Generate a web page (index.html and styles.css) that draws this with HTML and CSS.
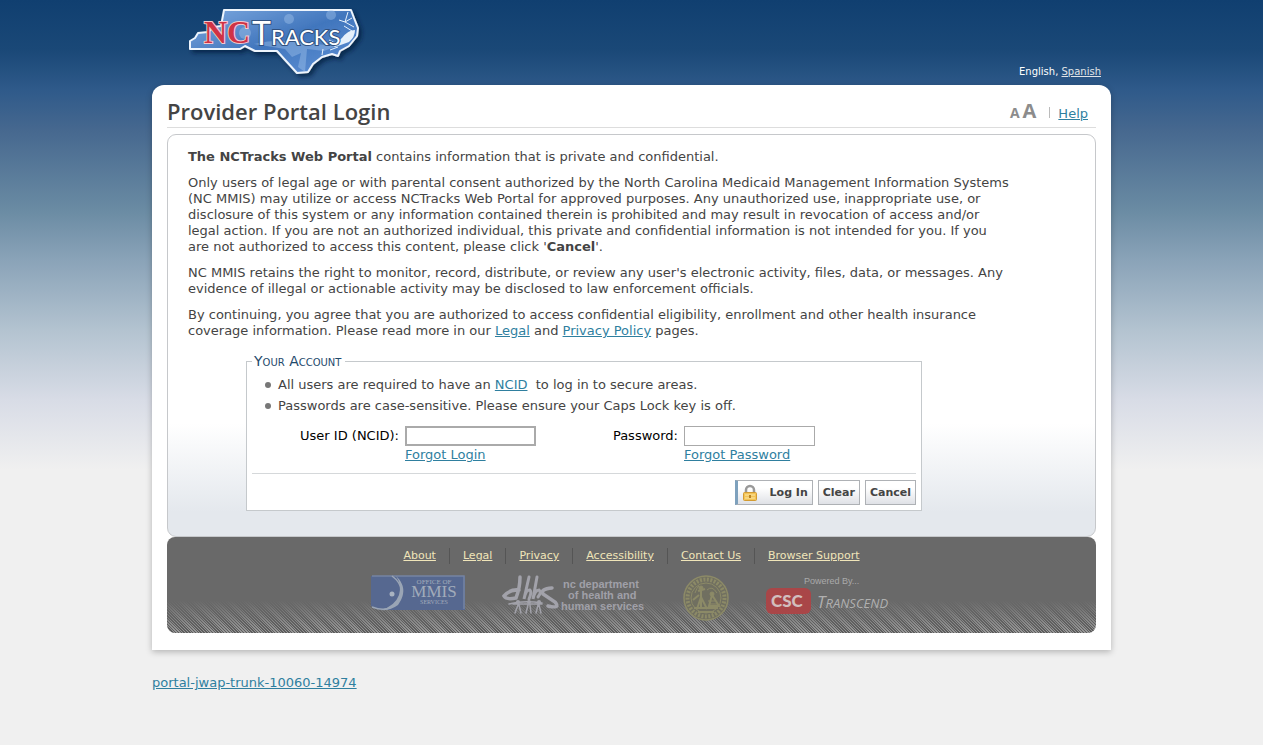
FILE: index.html
```html
<!DOCTYPE html>
<html lang="en">
<head>
<meta charset="utf-8">
<title>Provider Portal Login</title>
<link rel="stylesheet" href="styles.css">
</head>
<body>
<div class="page">
  <header class="masthead">
    <svg class="brand" width="182" height="80" viewBox="0 0 182 80" role="img" aria-label="NCTracks">
      <defs>
        <linearGradient id="state" x1="0" y1="0" x2="1" y2="1">
          <stop offset="0" stop-color="#7faae0"/><stop offset=".5" stop-color="#4176bd"/><stop offset="1" stop-color="#5f91d6"/>
        </linearGradient>
        <filter id="drop" x="-10%" y="-10%" width="125%" height="130%"><feDropShadow dx="3" dy="3" stdDeviation="2" flood-color="#031c3c" flood-opacity=".7"/></filter>
        <clipPath id="inside"><path d="M6 49V41L11 38L14 33L24 32L30 27L37 26L47 10H167L172 20L173 34L165 46L153 54L138 57L124 72L113 73L93 51L71 51L61 46Z"/></clipPath>
      </defs>
      <path filter="url(#drop)" d="M6 49V41L11 38L14 33L24 32L30 27L37 26L40 10H167L170 18L174 28L173 36L165 46L156 51L154 56L148 54L138 57L129 64L124 72L113 73L102 61L93 51L71 51L61 46L56 49Z" fill="url(#state)" stroke="#eef5fd" stroke-width="2" stroke-linejoin="round"/>
      <g clip-path="url(#inside)" fill="#a9c8ee" opacity=".4">
        <circle cx="105" cy="19" r="5"/><circle cx="147" cy="15" r="5"/><circle cx="61" cy="33" r="6"/>
        <path d="M70 44Q95 38 120 43L153 46L140 51L123 49L121 72L114 67L117 53L108 57L101 49Z"/>
      </g>
      <path d="M171 30Q164 30 158 38Q152 43 147 44L151 47L165 42Q171 37 171 30Z" fill="#e5f0fb"/>
      <path d="M164 12L161 22L168 18M161 22L170 27M161 22L155 20M160 26L168 31M138 55l1-6M146 50l8-3M151 43l-6-3" fill="none" stroke="#e5f0fb"/>
      <text x="20" y="43" class="brand-nc">NC</text>
      <text x="68" y="45" class="brand-tracks"><tspan font-size="32">T</tspan><tspan font-size="22">RACKS</tspan></text>
    </svg>
    <p class="languages">English, <a href="#">Spanish</a></p>
  </header>

  <div class="sheet">
    <div class="heading">
      <h1>Provider Portal Login</h1>
      <div class="tools">
        <button type="button" class="size-small" aria-label="Smaller text">A</button>
        <button type="button" class="size-large" aria-label="Larger text">A</button>
        <span class="rule"></span>
        <a href="#">Help</a>
      </div>
    </div>

    <main class="content">
      <div class="copy">
        <p><strong>The NCTracks Web Portal</strong> contains information that is private and confidential.</p>
        <p>Only users of legal age or with parental consent authorized by the North Carolina Medicaid Management Information Systems (NC MMIS) may utilize or access NCTracks Web Portal for approved purposes. Any unauthorized use, inappropriate use, or disclosure of this system or any information contained therein is prohibited and may result in revocation of access and/or legal action. If you are not an authorized individual, this private and confidential information is not intended for you. If you are not authorized to access this content, please click '<strong>Cancel</strong>'.</p>
        <p>NC MMIS retains the right to monitor, record, distribute, or review any user's electronic activity, files, data, or messages. Any evidence of illegal or actionable activity may be disclosed to law enforcement officials.</p>
        <p>By continuing, you agree that you are authorized to access confidential eligibility, enrollment and other health insurance coverage information. Please read more in our <a href="#">Legal</a> and <a href="#">Privacy Policy</a> pages.</p>
      </div>
      <form class="login">
        <fieldset>
          <legend>Your Account</legend>
          <ul class="notes">
            <li>All users are required to have an <a href="#">NCID</a>&nbsp; to log in to secure areas.</li>
            <li>Passwords are case-sensitive. Please ensure your Caps Lock key is off.</li>
          </ul>
          <div class="fields">
            <label for="user">User ID (NCID):</label>
            <div class="field"><input id="user" class="active" type="text"><a href="#">Forgot Login</a></div>
            <label for="pass">Password:</label>
            <div class="field"><input id="pass" type="password"><a href="#">Forgot Password</a></div>
          </div>
          <div class="actions">
            <button type="button" class="log-in">
              <svg width="16" height="18" viewBox="0 0 16 18" aria-hidden="true">
                <path d="M4 9V6a4 4 0 0 1 8 0v3" fill="none" stroke="#999" stroke-width="2.5"/>
                <rect x="1.5" y="8.500" width="13" height="8" rx="1" fill="#f3c457" stroke="#d39b31"/>
                <path d="M3 11h10M3 14h10" stroke="#fbe7a8"/><path d="M7 11h2v3H7z" fill="#b98325"/>
              </svg>
              Log In
            </button>
            <button type="reset">Clear</button>
            <button type="button">Cancel</button>
          </div>
        </fieldset>
      </form>
    </main>

    <footer class="footer">
      <nav class="links">
        <a href="#">About</a><a href="#">Legal</a><a href="#">Privacy</a><a href="#">Accessibility</a><a href="#">Contact Us</a><a href="#">Browser Support</a>
      </nav>
      <div class="partners">
        <svg width="94" height="36" viewBox="0 0 94 36" role="img" aria-label="Office of MMIS Services">
          <path d="M0 1H94V35H14Q4 34 0 31Z" fill="#566890"/>
          <path d="M1 1H93V34" fill="none" stroke="#7584a2" stroke-width="1.500"/>
          <path d="M21 1C32 9 32 19 26 28Q17 38 1 32" fill="none" stroke="#9aa5b5" stroke-width="1.500"/>
          <path d="M25 1C36 11 33 22 27 30Q19 36 10 35Q24 31 28 20Q31 10 25 1Z" fill="#9aa5b5"/>
          <circle cx="21" cy="19" r="2.500" fill="#a9b3c1"/>
          <g font-family="Liberation Serif, serif" fill="#a1abba" text-anchor="middle"><text x="63" y="9" font-size="7">OFFICE OF</text><text x="63" y="22" font-size="17">MMIS</text><text x="63" y="29" font-size="6">SERVICES</text></g>
        </svg>
        <svg width="144" height="42" viewBox="0 0 144 42" role="img" aria-label="NC Department of Health and Human Services">
          <g fill="none" stroke="#a2a2aa" stroke-linecap="round">
            <path d="M18 2Q18 13 14 23Q4 25 2 21Q8 14 17 15" stroke-width="3.500"/>
            <path d="M27 2L22 24Q24 14 28 15Q30 17 27 24M35 2L31 24Q33 15 37 15Q40 17 36 22" stroke-width="3"/>
            <path d="M50 13Q38 14 41 19L53 27Q59 34 46 31" stroke-width="3.500"/>
            <path d="M7 29Q22 25 40 28M11 29h10M22 29h9M32 29h8M16 30L13 38M17 30L19 38M26 30L24 38M28 30L29 38M36 30L34 38M37 30L39 38" stroke-width="1.500"/>
          </g>
          <g fill="#a2a2aa"><circle cx="16" cy="27" r="2"/><circle cx="27" cy="27" r="2"/><circle cx="37" cy="27" r="2"/></g>
          <g class="dhhs-name"><text x="61" y="13">nc department</text><text x="66" y="24">of health and</text><text x="59" y="35">human services</text></g>
        </svg>
        <svg width="46" height="46" viewBox="0 0 46 46" role="img" aria-label="State seal">
          <g fill="none" stroke="#8c8a67">
            <circle cx="23" cy="23" r="22" fill="#706f60" stroke-width="1.500"/>
            <circle cx="23" cy="23" r="18.500" stroke-width="4" stroke-dasharray="2 1.500"/>
            <circle cx="23" cy="23" r="15"/>
            <path d="M18 12v20M15 16l7-2M14 34l4-12 6 12M26 31l3-11 7 11zM11 33h24M10 25l6-5M15 37h16" stroke-width="2"/>
            <circle cx="18" cy="13" r="2" fill="#8c8a67"/><circle cx="29" cy="19" r="2" fill="#8c8a67"/>
            <path d="M24 15q5-5 10 3M12 18q2-6 4-7M25 26h7M27 29h8"/>
          </g>
        </svg>
        <svg width="126" height="42" viewBox="0 0 126 42" role="img" aria-label="Powered by CSC Transcend">
          <text x="38" y="9" class="powered">Powered By...</text>
          <rect x="0" y="13" width="45" height="26" rx="6" fill="#a94648"/>
          <text x="5" y="32" class="csc">CSC</text>
          <text x="51" y="33" class="transcend"><tspan font-size="17">T</tspan><tspan font-size="13">RANSCEND</tspan></text>
        </svg>
      </div>
    </footer>
  </div>
  <p class="build"><a href="#">portal-jwap-trunk-10060-14974</a></p>
</div>
</body>
</html>
```
FILE: styles.css
```css
* { box-sizing: border-box; }
body {
  margin: 0;
  min-height: 100vh;
  background: #f0f0f0 linear-gradient(#103f70, #1a4877 50px, #2f5a8a 90px, #46688f 130px, #6a8ba3 210px, #8aa3b8 260px, #b3c3d0 330px, #d8dce6 400px, #f0f0f0 470px) no-repeat;
  color: #444;
  font: 13px/16px "DejaVu Sans", sans-serif;
}
a { color: #2f7f9f; }
p, h1, ul { margin: 0; }
.page { max-width: 959px; margin: 0 auto; }
.masthead { display: flex; justify-content: space-between; align-items: flex-end; height: 85px; padding: 0 10px 5px 32px; }
.brand { overflow: visible; }
.brand-nc { font: bold 32px "Liberation Serif", serif; fill: #cf3245; stroke: #f3c9cf; stroke-width: 2px; paint-order: stroke; }
.brand-tracks { font-family: Lato, sans-serif; fill: #fff; stroke: #31517f; stroke-width: 2px; paint-order: stroke; }
.languages { font-size: 10px; color: #fff; }
.languages a { color: #e0e4e8; }
.sheet { padding: 12px 15px 17px; background: #fff; border-radius: 12px 12px 0 0; box-shadow: 0 2px 6px rgba(0, 0, 0, .25); }
.heading { display: flex; justify-content: space-between; align-items: center; height: 31px; border-bottom: 1px solid #ddd; }
h1 { font: 600 22px/28px "Open Sans", sans-serif; padding-bottom: 2px; }
.tools { display: flex; align-items: baseline; padding: 0 8px 4px 0; }
.tools button { padding: 0; border: 0; background: none; color: #8c8c8c; font: bold 14px "Open Sans", sans-serif; }
.tools .size-large { margin-left: 3px; font-size: 20px; }
.rule { width: 1px; height: 11px; margin: 0 8px 0 13px; background: #bbb; }
.content { margin-top: 6px; padding: 14px 20px 25px; border: 1px solid #c6c8cb; border-radius: 9px; background: linear-gradient(#fff 72%, #e4e8ed 94%); }
.copy { max-width: 822px; }
.copy p { margin-bottom: 10px; }
.login { max-width: 676px; margin: 14px 0 0 58px; }
fieldset { margin: 0; padding: 8px 5px 5px; border: 1px solid #c5c9cc; background: #fff; min-width: 0; }
legend { padding: 0 4px 0 2px; color: #1f4a6c; font-size: 14px; font-variant: small-caps; }
.notes { padding: 0; list-style: none; }
.notes li { display: flex; align-items: center; white-space: pre-wrap; margin: 0 0 5px 13px; }
.notes li::before { content: ""; width: 6px; height: 6px; margin-right: 7px; border-radius: 50%; background: #777; }
.fields { display: grid; grid-template-columns: 147px 194px 73px 1fr; column-gap: 6px; padding: 7px 0 10px; border-bottom: 1px solid #d5d8da; color: #000; }
.fields label { text-align: right; padding-top: 2px; }
.field { display: flex; flex-direction: column; align-items: flex-start; }
.field input { width: 131px; height: 20px; margin: 0 0 1px; border: 1px solid #aaa; background: #fff; }
.field .active { border: 2px solid #aaa; }
.actions { display: flex; justify-content: flex-end; gap: 5px; padding-top: 6px; }
.actions button { display: flex; align-items: center; height: 25px; padding: 0 4px; border: 1px solid #aeb1b5; background: linear-gradient(#fff 30%, #dfe1e6); color: #444; font: bold 11px "DejaVu Sans", sans-serif; }
.actions .log-in { gap: 12px; border-left: 3px solid #7ea1bd; }
.footer {
  height: 96px;
  padding-top: 11px;
  border-radius: 8px;
  background:
    linear-gradient(#696969 66%, transparent),
    repeating-linear-gradient(45deg, #5c5c5c 0 1px, #989898 1px 2px);
}
.links { display: flex; justify-content: center; font-size: 11px; }
.links a { padding: 0 13px; color: #f0e5b9; }
.links a + a { border-left: 1px solid #555; }
.partners { display: flex; justify-content: center; gap: 37px; margin-top: 11px; }
.dhhs-name { font: bold 11px "Liberation Sans", sans-serif; fill: #a0a0a8; }
.powered { font: 9px "Liberation Sans", sans-serif; fill: #aaa; }
.csc { font: 900 17px Lato, sans-serif; fill: #d2bebe; }
.transcend { font-family: "Open Sans", sans-serif; font-style: italic; fill: #b0b0b0; }
.build { margin-top: 25px; }
```
